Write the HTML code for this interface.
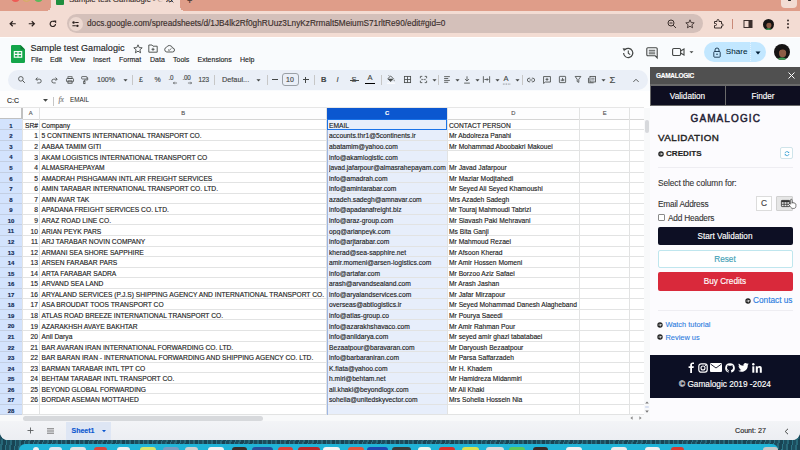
<!DOCTYPE html>
<html><head><meta charset="utf-8">
<style>
*{margin:0;padding:0;box-sizing:border-box}
html,body{width:800px;height:450px;overflow:hidden;background:#1b4f63;font-family:"Liberation Sans",sans-serif}
.ab{position:absolute}
.t{position:absolute;white-space:nowrap;line-height:1;-webkit-text-stroke:0.14px currentColor}
svg{position:absolute;overflow:visible}
.tb svg{transform:scale(.82)}
</style></head><body>

<div class="ab" style="left:0;top:430px;width:800px;height:20px;background:repeating-linear-gradient(100deg,#1c4d5e 0 3px,#276879 3px 5px,#184454 5px 8px,#2b7385 8px 9px)"></div>
<div class="ab" style="left:19px;top:443.8px;width:759px;height:10px;background:#20b4d8;border-radius:6px 6px 0 0"></div>
<div class="ab" style="left:32.5px;top:447.3px;width:6.5px;height:8px;background:#f2f4f5;border-radius:3px"></div>
<div class="ab" style="left:48.8px;top:447.3px;width:13.0px;height:8px;background:#dfe8f0;border-radius:3px"></div>
<div class="ab" style="left:70px;top:447.3px;width:16px;height:8px;background:#e4e4e4;border-radius:3px"></div>
<div class="ab" style="left:94px;top:447.3px;width:13px;height:8px;background:#d8463c;border-radius:3px"></div>
<div class="ab" style="left:117px;top:447.3px;width:13px;height:8px;background:#f0f0f0;border-radius:3px"></div>
<div class="ab" style="left:139.8px;top:447.3px;width:16.19999999999999px;height:8px;background:#d6e36a;border-radius:3px"></div>
<div class="ab" style="left:162.5px;top:447.3px;width:16.30000000000001px;height:8px;background:#7c9cc0;border-radius:3px"></div>
<div class="ab" style="left:185px;top:447.3px;width:13px;height:8px;background:#d0d0d0;border-radius:3px"></div>
<div class="ab" style="left:208px;top:447.3px;width:16px;height:8px;background:#f2f2f2;border-radius:3px"></div>
<div class="ab" style="left:232px;top:447.3px;width:15px;height:8px;background:#3a2c28;border-radius:3px"></div>
<div class="ab" style="left:252px;top:447.3px;width:21px;height:8px;background:#2a4f9a;border-radius:3px"></div>
<div class="ab" style="left:278px;top:447.3px;width:14.5px;height:8px;background:#d9403a;border-radius:3px"></div>
<div class="ab" style="left:298px;top:447.3px;width:22px;height:8px;background:#b8282a;border-radius:3px"></div>
<div class="ab" style="left:323px;top:447.3px;width:17px;height:8px;background:#f4f4f4;border-radius:3px"></div>
<div class="ab" style="left:348px;top:447.3px;width:16px;height:8px;background:#e0553e;border-radius:3px"></div>
<div class="ab" style="left:367px;top:447.3px;width:21px;height:8px;background:#2046b0;border-radius:3px"></div>
<div class="ab" style="left:391.6px;top:447.3px;width:19.399999999999977px;height:8px;background:#3a3a3a;border-radius:3px"></div>
<div class="ab" style="left:417.6px;top:447.3px;width:13.0px;height:8px;background:#eef6ee;border-radius:3px"></div>
<div class="ab" style="left:438.8px;top:447.3px;width:16.19999999999999px;height:8px;background:#d8302c;border-radius:3px"></div>
<div class="ab" style="left:461.5px;top:447.3px;width:17.5px;height:8px;background:#d9e050;border-radius:3px"></div>
<div class="ab" style="left:486px;top:447.3px;width:18px;height:8px;background:#dcdcdc;border-radius:3px"></div>
<div class="ab" style="left:508.7px;top:447.3px;width:16.30000000000001px;height:8px;background:#5cc85a;border-radius:3px"></div>
<div class="ab" style="left:533px;top:447.3px;width:14.600000000000023px;height:8px;background:#3a2a26;border-radius:3px"></div>
<div class="ab" style="left:565.5px;top:447.3px;width:16.299999999999955px;height:8px;background:#f0f0f0;border-radius:3px"></div>
<div class="ab" style="left:611px;top:447.3px;width:16px;height:8px;background:#ececec;border-radius:3px"></div>
<div class="ab" style="left:645px;top:447.3px;width:15px;height:8px;background:#f0f0f0;border-radius:3px"></div>
<div class="ab" style="left:670.6px;top:447.3px;width:13.199999999999932px;height:8px;background:#d83a30;border-radius:3px"></div>
<div class="ab" style="left:762.6px;top:447.3px;width:15.0px;height:8px;background:#c8c8c8;border-radius:3px"></div>
<div class="ab" style="left:0;top:0;width:800px;height:440px;background:#f9fbfd;border-radius:0 0 8px 8px;overflow:hidden">
<div class="ab" style="left:0;top:0;width:800px;height:11px;background:#df9d89"></div>
<div class="ab" style="left:10.5px;top:-7px;width:9px;height:9px;border-radius:50%;background:#ee5b55"></div>
<div class="ab" style="left:22px;top:-7px;width:9px;height:9px;border-radius:50%;background:#dfa585;border:1px solid #d4b060"></div>
<div class="ab" style="left:33.5px;top:-7px;width:9px;height:9px;border-radius:50%;background:#5cb85c"></div>
<div class="ab" style="left:51px;top:0;width:129px;height:12px;background:#f3dcd3;border-radius:0 0 0 0"></div>
<div class="ab" style="left:46px;top:6px;width:5px;height:5px;background:radial-gradient(circle at 0 0,#df9d89 5px,#f3dcd3 5px)"></div>
<div class="ab" style="left:180px;top:6px;width:5px;height:5px;background:radial-gradient(circle at 5px 0,#df9d89 5px,#f3dcd3 5px)"></div>
<div class="ab" style="left:56px;top:-2px;width:8px;height:7px;background:#1e8e3e;border-radius:1px"></div>
<div class="t" style="left:69px;top:-4.2px;font-size:7.9px;color:#3b2f2c">Sample test Gamalogic - Goo</div>
<div class="ab" style="left:152px;top:-2px;width:14px;height:10px;background:linear-gradient(90deg,rgba(243,220,211,0),#f3dcd3 80%)"></div>
<svg style="left:168.5px;top:-2.5px" width="5" height="5" viewBox="0 0 6 6"><path d="M0.8 0.8L5.2 5.2M5.2 0.8L0.8 5.2" stroke="#3b2f2c" stroke-width="1.1"/></svg>
<div class="t" style="left:187px;top:-3px;font-size:9px;color:#3b2f2c">+</div>
<div class="ab" style="left:781px;top:-4px;width:16px;height:11.5px;background:#f2dcd3;border-radius:4px"></div>
<div class="ab" style="left:787.5px;top:-0.5px;width:3px;height:1.8px;background:#222;border-radius:1px"></div>
<div class="ab" style="left:0;top:11px;width:800px;height:26px;background:#f3dcd3"></div>
<svg style="left:8.8px;top:20.3px" width="7.5" height="7.5" viewBox="0 0 10 10"><path d="M9 5H1.8M5 1.6L1.5 5 5 8.4" stroke="#2a201e" stroke-width="1.6" fill="none"/></svg>
<svg style="left:28.2px;top:20.3px" width="7.5" height="7.5" viewBox="0 0 10 10"><path d="M1 5H8.2M5 1.6L8.5 5 5 8.4" stroke="#2a201e" stroke-width="1.6" fill="none"/></svg>
<svg style="left:48.8px;top:20.2px" width="7.8" height="7.8" viewBox="0 0 10 10"><path d="M8.3 5A3.4 3.4 0 1 1 7 2.3" stroke="#2a201e" stroke-width="1.5" fill="none"/><path d="M5.4 0.6L9.2 0.6 9.2 4.4z" fill="#2a201e"/></svg>
<div class="ab" style="left:67px;top:14.3px;width:636px;height:18.8px;background:#d4c0ba;border-radius:10px"></div>
<div class="ab" style="left:68.5px;top:16.8px;width:14.5px;height:14.5px;background:#ecd8d0;border-radius:50%"></div>
<svg style="left:72.3px;top:20.8px" width="7" height="6.5" viewBox="0 0 8 7.5"><circle cx="1.8" cy="1.8" r="1.4" fill="#2a201e"/><path d="M3.6 1.8H7.6M0.4 5.6H4.4" stroke="#2a201e" stroke-width="1.2"/><circle cx="6.2" cy="5.6" r="1.4" fill="#2a201e"/></svg>
<div class="t" style="left:87px;top:20.3px;font-size:8.25px;color:#3b2f2c">docs.google.com/spreadsheets/d/1JB4lk2Rf0ghRUuz3LnyKzRrmalt5MeiumS71rltRe90/edit#gid=0</div>
<svg style="left:667px;top:19px" width="10" height="10" viewBox="0 0 10 10"><circle cx="4" cy="4" r="3" stroke="#3b2f2c" stroke-width="1" fill="none"/><path d="M6.2 6.2L9 9M2.5 4H5.5" stroke="#3b2f2c" stroke-width="1"/></svg>
<svg style="left:685px;top:19px" width="10" height="10" viewBox="0 0 10 10"><path d="M5 0.8L6.2 3.6 9.2 3.8 6.9 5.8 7.6 8.8 5 7.2 2.4 8.8 3.1 5.8 0.8 3.8 3.8 3.6z" stroke="#3b2f2c" stroke-width="0.9" fill="none"/></svg>
<svg style="left:713px;top:19px" width="10" height="10" viewBox="0 0 10 10"><path d="M1.5 2.5H4V1.5A1 1 0 0 1 6 1.5V2.5H8.5V5H9.2A1 1 0 0 1 9.2 7H8.5V9H1.5V6.5H2.5A1 1 0 0 0 2.5 4.5H1.5z" stroke="#3b2f2c" stroke-width="1" fill="none"/></svg>
<div class="ab" style="left:732px;top:19px;width:1px;height:10px;background:#c98a78"></div>
<svg style="left:743px;top:19px" width="10" height="10" viewBox="0 0 10 10"><rect x="1" y="1.5" width="8" height="7" stroke="#3b2f2c" stroke-width="1" fill="none"/><rect x="5.5" y="1.5" width="3.5" height="7" fill="#3b2f2c"/></svg>
<svg style="left:762.5px;top:18.5px" width="11" height="11" viewBox="0 0 16 16"><defs><clipPath id="av1"><circle cx="8" cy="8" r="8"/></clipPath></defs><g clip-path="url(#av1)"><rect width="16" height="16" fill="#161414"/><ellipse cx="8.6" cy="9" rx="3.6" ry="4.3" fill="#8d5c45"/><path d="M4.5 7.5Q5 3 9 3.2 12.5 3.6 12.6 7.5 11 5.2 8.5 5.5 6 5.6 4.5 7.5z" fill="#161414"/><ellipse cx="8" cy="16.5" rx="5.5" ry="3" fill="#3f9a55"/></g></svg>
<svg style="left:786px;top:19px" width="4" height="10" viewBox="0 0 4 10"><circle cx="2" cy="1.5" r="1" fill="#3b2f2c"/><circle cx="2" cy="5" r="1" fill="#3b2f2c"/><circle cx="2" cy="8.5" r="1" fill="#3b2f2c"/></svg>
<div class="ab" style="left:0;top:37px;width:800px;height:1px;background:#ffffff"></div>
<svg style="left:10.5px;top:45px" width="14" height="18" viewBox="0 0 14 18"><path d="M1.3 0H9.5L14 4.5V16.7A1.3 1.3 0 0 1 12.7 18H1.3A1.3 1.3 0 0 1 0 16.7V1.3A1.3 1.3 0 0 1 1.3 0z" fill="#14a54a"/><path d="M9.5 0V4.5H14z" fill="#0c7d35"/><rect x="3.3" y="6.6" width="7.4" height="5.6" fill="none" stroke="#fff" stroke-width="1.1"/><path d="M3.3 9.4H10.7M7 6.6V12.2" stroke="#fff" stroke-width="1.1"/></svg>
<div class="t" style="left:30.5px;top:44px;font-size:9.1px;color:#1f1f1f">Sample test Gamalogic</div>
<svg style="left:132.5px;top:43.5px" width="10" height="10" viewBox="0 0 10 10"><path d="M5 0.8L6.2 3.6 9.2 3.8 6.9 5.8 7.6 8.8 5 7.2 2.4 8.8 3.1 5.8 0.8 3.8 3.8 3.6z" stroke="#444746" stroke-width="0.9" fill="none"/></svg>
<svg style="left:148px;top:44px" width="10" height="9" viewBox="0 0 10 9"><path d="M0.8 1H4L5 2.2H9.2V8.2H0.8z" stroke="#444746" stroke-width="0.9" fill="none"/><path d="M5 3.8V6.8M3.5 5.3H6.5" stroke="#444746" stroke-width="0.9"/></svg>
<svg style="left:163.5px;top:44px" width="11" height="9" viewBox="0 0 11 9"><path d="M2.8 8H8.5A2 2 0 0 0 8.5 4 3.2 3.2 0 0 0 2.5 3.3 2.4 2.4 0 0 0 2.8 8z" stroke="#444746" stroke-width="0.9" fill="none"/><path d="M4 5.5L5.2 6.6 7.2 4.4" stroke="#444746" stroke-width="0.8" fill="none"/></svg>
<div class="t" style="left:31px;top:55.5px;font-size:7px;color:#1f1f1f">File</div>
<div class="t" style="left:50px;top:55.5px;font-size:7px;color:#1f1f1f">Edit</div>
<div class="t" style="left:70px;top:55.5px;font-size:7px;color:#1f1f1f">View</div>
<div class="t" style="left:93px;top:55.5px;font-size:7px;color:#1f1f1f">Insert</div>
<div class="t" style="left:119px;top:55.5px;font-size:7px;color:#1f1f1f">Format</div>
<div class="t" style="left:150px;top:55.5px;font-size:7px;color:#1f1f1f">Data</div>
<div class="t" style="left:173px;top:55.5px;font-size:7px;color:#1f1f1f">Tools</div>
<div class="t" style="left:197.5px;top:55.5px;font-size:7px;color:#1f1f1f">Extensions</div>
<div class="t" style="left:240px;top:55.5px;font-size:7px;color:#1f1f1f">Help</div>
<svg style="left:621.5px;top:46.5px" width="12" height="12" viewBox="0 0 12 12"><path d="M1.6 6A4.6 4.6 0 1 0 3 2.7" stroke="#444746" stroke-width="1.2" fill="none"/><path d="M0.6 1.2L3.6 1.6 2.2 4.4z" fill="#444746"/><path d="M6.3 3.4V6.3L8.2 7.6" stroke="#444746" stroke-width="1.1" fill="none"/></svg>
<svg style="left:646px;top:46.5px" width="12" height="12" viewBox="0 0 12 12"><path d="M1.8 0.8H10.2A1 1 0 0 1 11.2 1.8V10.8L9.2 8.8H1.8A1 1 0 0 1 0.8 7.8V1.8A1 1 0 0 1 1.8 0.8z" stroke="#444746" stroke-width="1.1" fill="none"/><path d="M2.8 3.3H9.2M2.8 5.1H9.2M2.8 6.8H9.2" stroke="#444746" stroke-width="0.9"/></svg>
<svg style="left:672px;top:47px" width="24" height="10" viewBox="0 0 24 10"><rect x="0.6" y="1.5" width="8" height="7" rx="1.2" stroke="#444746" stroke-width="1.1" fill="none"/><path d="M8.6 4L12 2V8L8.6 6" stroke="#444746" stroke-width="1.1" fill="none"/><path d="M17.5 4.2H21.5L19.5 6.2z" fill="#444746"/></svg>
<div class="ab" style="left:704px;top:42px;width:62px;height:20px;background:#c2e7ff;border-radius:10px"></div>
<div class="ab" style="left:749.5px;top:42px;width:1px;height:20px;background:repeating-linear-gradient(#e4f3ff 0 1px,#c2e7ff 1px 2px)"></div>
<svg style="left:713px;top:46.5px" width="8" height="11" viewBox="0 0 8 11"><path d="M2 4.5V3A2 2 0 0 1 6 3V4.5" stroke="#001d35" stroke-width="0.8" fill="none"/><rect x="0.8" y="4.5" width="6.4" height="5.7" rx="0.8" stroke="#001d35" stroke-width="0.8" fill="none"/><circle cx="4" cy="7.3" r="0.7" fill="#001d35"/></svg>
<div class="t" style="left:725.8px;top:48.3px;font-size:8.1px;color:#001d35;-webkit-text-stroke:0.05px #001d35">Share</div>
<svg style="left:754.5px;top:50.5px" width="6" height="4" viewBox="0 0 6 4"><path d="M0.5 0.5H5.5L3 3.5z" fill="#001d35"/></svg>
<svg style="left:774px;top:44px" width="16" height="16" viewBox="0 0 16 16"><defs><clipPath id="av2"><circle cx="8" cy="8" r="8"/></clipPath></defs><g clip-path="url(#av2)"><rect width="16" height="16" fill="#161414"/><ellipse cx="8.6" cy="9" rx="3.6" ry="4.3" fill="#8d5c45"/><path d="M4.5 7.5Q5 3 9 3.2 12.5 3.6 12.6 7.5 11 5.2 8.5 5.5 6 5.6 4.5 7.5z" fill="#161414"/><ellipse cx="8" cy="16.5" rx="5.5" ry="3" fill="#3f9a55"/></g></svg>
<div class="ab" style="left:0;top:90.5px;width:650px;height:17px;background:#fefefe"></div>
<div class="ab" style="left:8px;top:69.5px;width:640px;height:20px;background:#eaeff7;border-radius:10px"></div>
<div class="ab tb" style="left:0;top:-0.3px;width:800px;height:0">
<svg style="left:16.5px;top:75.5px" width="9" height="9" viewBox="0 0 9 9"><circle cx="3.7" cy="3.7" r="2.8" stroke="#444746" stroke-width="1" fill="none"/><path d="M5.8 5.8L8.5 8.5" stroke="#444746" stroke-width="1.2"/></svg>
<svg style="left:34px;top:76px" width="9" height="8" viewBox="0 0 9 8"><path d="M1.5 3H5.5A2.3 2.3 0 0 1 5.5 7.6H3" stroke="#444746" stroke-width="1" fill="none"/><path d="M3.2 1L1.2 3 3.2 5" stroke="#444746" stroke-width="1" fill="none"/></svg>
<svg style="left:50px;top:76px" width="9" height="8" viewBox="0 0 9 8"><path d="M7.5 3H3.5A2.3 2.3 0 0 0 3.5 7.6H6" stroke="#444746" stroke-width="1" fill="none"/><path d="M5.8 1L7.8 3 5.8 5" stroke="#444746" stroke-width="1" fill="none"/></svg>
<svg style="left:64.5px;top:75px" width="10" height="10" viewBox="0 0 10 10"><rect x="2.5" y="1" width="5" height="2.2" stroke="#444746" stroke-width="0.9" fill="none"/><rect x="0.7" y="3.2" width="8.6" height="4" rx="1" stroke="#444746" stroke-width="1" fill="none"/><rect x="2.5" y="6" width="5" height="3" stroke="#444746" stroke-width="0.9" fill="none"/></svg>
<svg style="left:80px;top:75px" width="9" height="10" viewBox="0 0 9 10"><rect x="1" y="0.8" width="6.5" height="3" rx="0.6" stroke="#444746" stroke-width="0.9" fill="none"/><path d="M7.5 2.3H8.4V5H4.3V6.5" stroke="#444746" stroke-width="0.9" fill="none"/><rect x="3.5" y="6.5" width="1.6" height="3" stroke="#444746" stroke-width="0.9" fill="none"/></svg>
<div class="t" style="left:97px;top:76.5px;font-size:7px;color:#444746">100%</div>
<svg style="left:122.5px;top:79px" width="5" height="3" viewBox="0 0 5 3"><path d="M0 0H5L2.5 2.8z" fill="#444746"/></svg>
<div class="ab" style="left:132px;top:75px;width:1px;height:10px;background:#c7c7c7"></div>
<div class="t" style="left:139px;top:76.5px;font-size:7px;color:#444746">£</div>
<div class="t" style="left:154.5px;top:76.5px;font-size:7px;color:#444746">%</div>
<div class="t" style="left:168.5px;top:75.3px;font-size:6.3px;color:#444746;letter-spacing:-0.2px">.0</div>
<svg style="left:172px;top:81px" width="6" height="4" viewBox="0 0 6 4"><path d="M5.5 2H1M2.5 0.5L1 2 2.5 3.5" stroke="#444746" stroke-width="0.8" fill="none"/></svg>
<div class="t" style="left:182.5px;top:75.3px;font-size:6.3px;color:#444746;letter-spacing:-0.3px">.00</div>
<svg style="left:187px;top:81px" width="6" height="4" viewBox="0 0 6 4"><path d="M0.5 2H5M3.5 0.5L5 2 3.5 3.5" stroke="#444746" stroke-width="0.8" fill="none"/></svg>
<div class="t" style="left:198.5px;top:76.8px;font-size:6.4px;color:#444746">123</div>
<div class="ab" style="left:214px;top:75px;width:1px;height:10px;background:#c7c7c7"></div>
<div class="t" style="left:222px;top:76.2px;font-size:7.3px;color:#444746">Defaul...</div>
<svg style="left:255.5px;top:79px" width="5" height="3" viewBox="0 0 5 3"><path d="M0 0H5L2.5 2.8z" fill="#444746"/></svg>
<div class="ab" style="left:267px;top:75px;width:1px;height:10px;background:#c7c7c7"></div>
<div class="ab" style="left:272px;top:79.6px;width:6px;height:0.8px;background:#444746"></div>
<div class="ab" style="left:282px;top:73px;width:17px;height:13.5px;border:1px solid #9aa0a6;border-radius:3px"></div>
<div class="t" style="left:286px;top:76.5px;font-size:7px;color:#444746">10</div>
<div class="ab" style="left:302.8px;top:79.6px;width:6px;height:0.8px;background:#444746"></div><div class="ab" style="left:305.4px;top:77px;width:0.8px;height:6px;background:#444746"></div>
<div class="ab" style="left:314px;top:75px;width:1px;height:10px;background:#c7c7c7"></div>
<div class="t" style="left:321px;top:76px;font-size:7.5px;font-weight:bold;color:#444746">B</div>
<div class="t" style="left:336.5px;top:76px;font-size:7.5px;font-style:italic;color:#444746">I</div>
<div class="t" style="left:351.5px;top:76px;font-size:7.5px;color:#444746">S</div><div class="ab" style="left:350px;top:80px;width:9px;height:1px;background:#444746"></div>
<div class="t" style="left:367.5px;top:74.5px;font-size:7.5px;color:#444746">A</div><div class="ab" style="left:365px;top:83px;width:10px;height:1.6px;background:#000"></div>
<div class="ab" style="left:381px;top:75px;width:1px;height:10px;background:#c7c7c7"></div>
<svg style="left:386px;top:74.5px" width="10" height="11" viewBox="0 0 10 11"><path d="M2.2 0.6L3.2 1.6M1 4.6L4.6 1.2 8 4.6 4.6 8z" stroke="#444746" stroke-width="1" fill="none"/><path d="M1.3 4.6H7.7L4.6 7.6z" fill="#444746"/><path d="M8.8 5.6Q9.8 7.1 8.8 7.8 7.8 7.1 8.8 5.6z" fill="#444746"/><rect x="0" y="9.3" width="10" height="1.3" fill="#fff"/></svg>
<svg style="left:402.5px;top:75.5px" width="9" height="9" viewBox="0 0 9 9"><rect x="0.7" y="0.7" width="7.6" height="7.6" stroke="#444746" stroke-width="1" fill="none"/><path d="M4.5 0.7V8.3M0.7 4.5H8.3" stroke="#444746" stroke-width="1"/></svg>
<svg style="left:418.5px;top:75.5px" width="9" height="9" viewBox="0 0 9 9"><path d="M0.7 3V0.7H3M6 0.7H8.3V3M8.3 6V8.3H6M3 8.3H0.7V6" stroke="#444746" stroke-width="1" fill="none"/><path d="M1.8 4.5H3.4M2.8 3.6L3.6 4.5 2.8 5.4M7.2 4.5H5.6M6.2 3.6L5.4 4.5 6.2 5.4" stroke="#444746" stroke-width="0.8" fill="none"/></svg>
<svg style="left:431.5px;top:79px" width="5" height="3" viewBox="0 0 5 3"><path d="M0 0H5L2.5 2.8z" fill="#444746"/></svg>
<div class="ab" style="left:438px;top:75px;width:1px;height:10px;background:#c7c7c7"></div>
<svg style="left:443px;top:75.5px" width="8" height="9" viewBox="0 0 8 9"><path d="M0.5 1H7.5M0.5 3.3H5.5M0.5 5.6H7.5M0.5 7.9H5.5" stroke="#444746" stroke-width="1"/></svg>
<svg style="left:454.5px;top:79px" width="5" height="3" viewBox="0 0 5 3"><path d="M0 0H5L2.5 2.8z" fill="#444746"/></svg>
<svg style="left:463px;top:75px" width="8" height="10" viewBox="0 0 8 10"><path d="M4 0.5V6M1.5 3.8L4 6.3 6.5 3.8M0.5 8.8H7.5" stroke="#444746" stroke-width="1" fill="none"/></svg>
<svg style="left:474.5px;top:79px" width="5" height="3" viewBox="0 0 5 3"><path d="M0 0H5L2.5 2.8z" fill="#444746"/></svg>
<svg style="left:482px;top:75.5px" width="9" height="9" viewBox="0 0 9 9"><path d="M0.7 0.5V8.5M8.3 0.5V8.5M2 4.5H6.5M5 3L6.5 4.5 5 6" stroke="#444746" stroke-width="1" fill="none"/></svg>
<svg style="left:494.5px;top:79px" width="5" height="3" viewBox="0 0 5 3"><path d="M0 0H5L2.5 2.8z" fill="#444746"/></svg>
<div class="t" style="left:503.5px;top:75.5px;font-size:7.5px;color:#444746">A</div><svg style="left:502px;top:83px" width="10" height="3"><path d="M0 1H10" stroke="#444746" stroke-width="0.8" stroke-dasharray="1 1"/></svg>
<svg style="left:514.5px;top:79px" width="5" height="3" viewBox="0 0 5 3"><path d="M0 0H5L2.5 2.8z" fill="#444746"/></svg>
<div class="ab" style="left:522px;top:75px;width:1px;height:10px;background:#c7c7c7"></div>
<svg style="left:526px;top:77px" width="10" height="6" viewBox="0 0 10 6"><path d="M4 0.8H2.8A2.2 2.2 0 0 0 2.8 5.2H4M6 0.8H7.2A2.2 2.2 0 0 1 7.2 5.2H6M3.3 3H6.7" stroke="#444746" stroke-width="1" fill="none"/></svg>
<svg style="left:542px;top:75px" width="10" height="10" viewBox="0 0 10 10"><path d="M0.8 0.8H9.2V7.5H3L0.8 9.2z" stroke="#444746" stroke-width="1" fill="none"/><path d="M5 2.3V6M3.2 4.2H6.8" stroke="#444746" stroke-width="1"/></svg>
<svg style="left:557.5px;top:75.5px" width="9" height="9" viewBox="0 0 9 9"><rect x="0.7" y="0.7" width="7.6" height="7.6" rx="0.5" stroke="#444746" stroke-width="1" fill="none"/><path d="M3 6.5V4.5M4.5 6.5V2.5M6 6.5V3.8" stroke="#444746" stroke-width="1"/></svg>
<svg style="left:574px;top:75.5px" width="8" height="9" viewBox="0 0 8 9"><path d="M0.5 0.8H7.5L5 4.2V8L3 7V4.2z" stroke="#444746" stroke-width="1" fill="none"/></svg>
<svg style="left:587px;top:75.5px" width="10" height="9" viewBox="0 0 10 9"><rect x="2.5" y="0.7" width="6.8" height="6.8" stroke="#444746" stroke-width="1" fill="none"/><path d="M0.7 2.5V8.5H7" stroke="#444746" stroke-width="1" fill="none"/><path d="M4 3H8M4 5H8" stroke="#444746" stroke-width="0.8"/></svg>
<svg style="left:600.5px;top:79px" width="5" height="3" viewBox="0 0 5 3"><path d="M0 0H5L2.5 2.8z" fill="#444746"/></svg>
<div class="t" style="left:609.5px;top:75px;font-size:9.5px;color:#444746">Σ</div>
<svg style="left:631.5px;top:77.8px" width="8" height="5" viewBox="0 0 8 5"><path d="M0.8 4.2L4 1 7.2 4.2" stroke="#444746" stroke-width="1.1" fill="none"/></svg>
</div>
<div class="t" style="left:7px;top:96.5px;font-size:7px;color:#1f1f1f">C:C</div>
<svg style="left:43px;top:98.7px" width="5" height="3" viewBox="0 0 5 3"><path d="M0 0H5L2.5 2.8z" fill="#444746"/></svg>
<div class="ab" style="left:53px;top:96.5px;width:1px;height:9px;background:#c7c7c7"></div>
<div class="t" style="left:58.5px;top:96px;font-size:7.5px;font-style:italic;font-family:'Liberation Serif';color:#777">fx</div>
<div class="t" style="left:70px;top:97.3px;font-size:6.3px;color:#1f1f1f;-webkit-text-stroke:0">EMAIL</div>
<div class="ab" style="left:0;top:107px;width:650px;height:314px;background:#fff"></div>
<div class="ab" style="left:0;top:107.5px;width:644px;height:11.799999999999997px;background:#fdfdfe"></div>
<div class="ab" style="left:0;top:119.3px;width:22px;height:295.68px;background:#d3e3fd"></div>
<div class="ab" style="left:327px;top:107.5px;width:120px;height:11.799999999999997px;background:#0b57d0"></div>
<div class="ab" style="left:327px;top:119.3px;width:120px;height:295.68px;background:#e7eefb"></div>
<div class="ab" style="left:0;top:107px;width:644px;height:1px;background:#e6e6e6"></div>
<div class="ab" style="left:22px;top:119px;width:622px;height:1px;background:#d5d5d5"></div>
<div class="ab" style="left:22px;top:129px;width:622px;height:1px;background:#e2e3e3"></div>
<div class="ab" style="left:0;top:129px;width:22px;height:1px;background:#c3cfe3"></div>
<div class="ab" style="left:22px;top:140px;width:622px;height:1px;background:#e2e3e3"></div>
<div class="ab" style="left:0;top:140px;width:22px;height:1px;background:#c3cfe3"></div>
<div class="ab" style="left:22px;top:150px;width:622px;height:1px;background:#e2e3e3"></div>
<div class="ab" style="left:0;top:150px;width:22px;height:1px;background:#c3cfe3"></div>
<div class="ab" style="left:22px;top:161px;width:622px;height:1px;background:#e2e3e3"></div>
<div class="ab" style="left:0;top:161px;width:22px;height:1px;background:#c3cfe3"></div>
<div class="ab" style="left:22px;top:172px;width:622px;height:1px;background:#e2e3e3"></div>
<div class="ab" style="left:0;top:172px;width:22px;height:1px;background:#c3cfe3"></div>
<div class="ab" style="left:22px;top:182px;width:622px;height:1px;background:#e2e3e3"></div>
<div class="ab" style="left:0;top:182px;width:22px;height:1px;background:#c3cfe3"></div>
<div class="ab" style="left:22px;top:193px;width:622px;height:1px;background:#e2e3e3"></div>
<div class="ab" style="left:0;top:193px;width:22px;height:1px;background:#c3cfe3"></div>
<div class="ab" style="left:22px;top:203px;width:622px;height:1px;background:#e2e3e3"></div>
<div class="ab" style="left:0;top:203px;width:22px;height:1px;background:#c3cfe3"></div>
<div class="ab" style="left:22px;top:214px;width:622px;height:1px;background:#e2e3e3"></div>
<div class="ab" style="left:0;top:214px;width:22px;height:1px;background:#c3cfe3"></div>
<div class="ab" style="left:22px;top:224px;width:622px;height:1px;background:#e2e3e3"></div>
<div class="ab" style="left:0;top:224px;width:22px;height:1px;background:#c3cfe3"></div>
<div class="ab" style="left:22px;top:235px;width:622px;height:1px;background:#e2e3e3"></div>
<div class="ab" style="left:0;top:235px;width:22px;height:1px;background:#c3cfe3"></div>
<div class="ab" style="left:22px;top:246px;width:622px;height:1px;background:#e2e3e3"></div>
<div class="ab" style="left:0;top:246px;width:22px;height:1px;background:#c3cfe3"></div>
<div class="ab" style="left:22px;top:256px;width:622px;height:1px;background:#e2e3e3"></div>
<div class="ab" style="left:0;top:256px;width:22px;height:1px;background:#c3cfe3"></div>
<div class="ab" style="left:22px;top:267px;width:622px;height:1px;background:#e2e3e3"></div>
<div class="ab" style="left:0;top:267px;width:22px;height:1px;background:#c3cfe3"></div>
<div class="ab" style="left:22px;top:277px;width:622px;height:1px;background:#e2e3e3"></div>
<div class="ab" style="left:0;top:277px;width:22px;height:1px;background:#c3cfe3"></div>
<div class="ab" style="left:22px;top:288px;width:622px;height:1px;background:#e2e3e3"></div>
<div class="ab" style="left:0;top:288px;width:22px;height:1px;background:#c3cfe3"></div>
<div class="ab" style="left:22px;top:298px;width:622px;height:1px;background:#e2e3e3"></div>
<div class="ab" style="left:0;top:298px;width:22px;height:1px;background:#c3cfe3"></div>
<div class="ab" style="left:22px;top:309px;width:622px;height:1px;background:#e2e3e3"></div>
<div class="ab" style="left:0;top:309px;width:22px;height:1px;background:#c3cfe3"></div>
<div class="ab" style="left:22px;top:319px;width:622px;height:1px;background:#e2e3e3"></div>
<div class="ab" style="left:0;top:319px;width:22px;height:1px;background:#c3cfe3"></div>
<div class="ab" style="left:22px;top:330px;width:622px;height:1px;background:#e2e3e3"></div>
<div class="ab" style="left:0;top:330px;width:22px;height:1px;background:#c3cfe3"></div>
<div class="ab" style="left:22px;top:341px;width:622px;height:1px;background:#e2e3e3"></div>
<div class="ab" style="left:0;top:341px;width:22px;height:1px;background:#c3cfe3"></div>
<div class="ab" style="left:22px;top:351px;width:622px;height:1px;background:#e2e3e3"></div>
<div class="ab" style="left:0;top:351px;width:22px;height:1px;background:#c3cfe3"></div>
<div class="ab" style="left:22px;top:362px;width:622px;height:1px;background:#e2e3e3"></div>
<div class="ab" style="left:0;top:362px;width:22px;height:1px;background:#c3cfe3"></div>
<div class="ab" style="left:22px;top:372px;width:622px;height:1px;background:#e2e3e3"></div>
<div class="ab" style="left:0;top:372px;width:22px;height:1px;background:#c3cfe3"></div>
<div class="ab" style="left:22px;top:383px;width:622px;height:1px;background:#e2e3e3"></div>
<div class="ab" style="left:0;top:383px;width:22px;height:1px;background:#c3cfe3"></div>
<div class="ab" style="left:22px;top:393px;width:622px;height:1px;background:#e2e3e3"></div>
<div class="ab" style="left:0;top:393px;width:22px;height:1px;background:#c3cfe3"></div>
<div class="ab" style="left:22px;top:404px;width:622px;height:1px;background:#e2e3e3"></div>
<div class="ab" style="left:0;top:404px;width:22px;height:1px;background:#c3cfe3"></div>
<div class="ab" style="left:22px;top:414px;width:622px;height:1px;background:#e2e3e3"></div>
<div class="ab" style="left:0;top:414px;width:22px;height:1px;background:#c3cfe3"></div>
<div class="ab" style="left:22px;top:107.5px;width:1px;height:307.48px;background:#e2e3e3"></div>
<div class="ab" style="left:39px;top:107.5px;width:1px;height:307.48px;background:#e2e3e3"></div>
<div class="ab" style="left:326px;top:107.5px;width:1px;height:307.48px;background:#e2e3e3"></div>
<div class="ab" style="left:447px;top:107.5px;width:1px;height:307.48px;background:#e2e3e3"></div>
<div class="ab" style="left:579px;top:107.5px;width:1px;height:307.48px;background:#e2e3e3"></div>
<div class="ab" style="left:629px;top:107.5px;width:1px;height:307.48px;background:#e2e3e3"></div>
<div class="ab" style="left:644px;top:107.5px;width:1px;height:307.48px;background:#e2e3e3"></div>
<div class="ab" style="left:21px;top:107.5px;width:1.5px;height:11.799999999999997px;background:#c0c0c0"></div>
<div class="ab" style="left:0;top:117.8px;width:22px;height:1.5px;background:#c0c0c0"></div>
<div class="ab" style="left:326.5px;top:119.3px;width:1px;height:295.68px;background:#9fb7e3"></div>
<div class="ab" style="left:327px;top:119.0px;width:120px;height:11.16px;border:1px solid #1a73e8"></div>
<div class="t" style="left:22px;width:17.5px;text-align:center;top:110.8px;font-size:5.8px;color:#575757;font-weight:normal">A</div>
<div class="t" style="left:39.5px;width:287.5px;text-align:center;top:110.8px;font-size:5.8px;color:#575757;font-weight:normal">B</div>
<div class="t" style="left:327px;width:120px;text-align:center;top:110.8px;font-size:5.8px;color:#fff;font-weight:bold">C</div>
<div class="t" style="left:447px;width:132.5px;text-align:center;top:110.8px;font-size:5.8px;color:#575757;font-weight:normal">D</div>
<div class="t" style="left:579.5px;width:50.5px;text-align:center;top:110.8px;font-size:5.8px;color:#575757;font-weight:normal">E</div>
<div class="t" style="left:0;width:22px;text-align:center;top:122.8px;font-size:6px;font-weight:bold;color:#0f2a55">1</div>
<div class="t" style="left:22px;width:16px;text-align:right;top:122.89999999999999px;font-size:6.7px;color:#222">SR#</div>
<div class="t" style="left:41.5px;top:122.89999999999999px;font-size:6.7px;color:#222">Company</div>
<div class="t" style="left:329px;top:122.89999999999999px;width:116.5px;overflow:hidden;font-size:6.7px;color:#222">EMAIL</div>
<div class="t" style="left:449px;top:122.89999999999999px;font-size:6.7px;color:#222">CONTACT PERSON</div>
<div class="t" style="left:0;width:22px;text-align:center;top:133.35999999999999px;font-size:6px;font-weight:bold;color:#0f2a55">2</div>
<div class="t" style="left:22px;width:16px;text-align:right;top:133.45999999999998px;font-size:6.7px;color:#222">1</div>
<div class="t" style="left:41.5px;top:133.45999999999998px;font-size:6.7px;color:#222">5 CONTINENTS INTERNATIONAL TRANSPORT CO.</div>
<div class="t" style="left:329px;top:133.45999999999998px;width:116.5px;overflow:hidden;font-size:6.7px;color:#222">accounts.thr1@5continents.ir</div>
<div class="t" style="left:449px;top:133.45999999999998px;font-size:6.7px;color:#222">Mr Abdolreza Panahi</div>
<div class="t" style="left:0;width:22px;text-align:center;top:143.92px;font-size:6px;font-weight:bold;color:#0f2a55">3</div>
<div class="t" style="left:22px;width:16px;text-align:right;top:144.01999999999998px;font-size:6.7px;color:#222">2</div>
<div class="t" style="left:41.5px;top:144.01999999999998px;font-size:6.7px;color:#222">AABAA TAMIM GITI</div>
<div class="t" style="left:329px;top:144.01999999999998px;width:116.5px;overflow:hidden;font-size:6.7px;color:#222">abatamim@yahoo.com</div>
<div class="t" style="left:449px;top:144.01999999999998px;font-size:6.7px;color:#222">Mr Mohammad Aboobakri Makouei</div>
<div class="t" style="left:0;width:22px;text-align:center;top:154.48px;font-size:6px;font-weight:bold;color:#0f2a55">4</div>
<div class="t" style="left:22px;width:16px;text-align:right;top:154.57999999999998px;font-size:6.7px;color:#222">3</div>
<div class="t" style="left:41.5px;top:154.57999999999998px;font-size:6.7px;color:#222">AKAM LOGISTICS INTERNATIONAL TRANSPORT CO</div>
<div class="t" style="left:329px;top:154.57999999999998px;width:116.5px;overflow:hidden;font-size:6.7px;color:#222">info@akamlogistic.com</div>
<div class="t" style="left:0;width:22px;text-align:center;top:165.04px;font-size:6px;font-weight:bold;color:#0f2a55">5</div>
<div class="t" style="left:22px;width:16px;text-align:right;top:165.14px;font-size:6.7px;color:#222">4</div>
<div class="t" style="left:41.5px;top:165.14px;font-size:6.7px;color:#222">ALMASRAHEPAYAM</div>
<div class="t" style="left:329px;top:165.14px;width:116.5px;overflow:hidden;font-size:6.7px;color:#222">javad.jafarpour@almasrahepayam.com</div>
<div class="t" style="left:449px;top:165.14px;font-size:6.7px;color:#222">Mr Javad Jafarpour</div>
<div class="t" style="left:0;width:22px;text-align:center;top:175.6px;font-size:6px;font-weight:bold;color:#0f2a55">6</div>
<div class="t" style="left:22px;width:16px;text-align:right;top:175.7px;font-size:6.7px;color:#222">5</div>
<div class="t" style="left:41.5px;top:175.7px;font-size:6.7px;color:#222">AMADRAH PISHGAMAN INTL AIR FREIGHT SERVICES</div>
<div class="t" style="left:329px;top:175.7px;width:116.5px;overflow:hidden;font-size:6.7px;color:#222">info@amadrah.com</div>
<div class="t" style="left:449px;top:175.7px;font-size:6.7px;color:#222">Mr Maziar Modjtahedi</div>
<div class="t" style="left:0;width:22px;text-align:center;top:186.16px;font-size:6px;font-weight:bold;color:#0f2a55">7</div>
<div class="t" style="left:22px;width:16px;text-align:right;top:186.26px;font-size:6.7px;color:#222">6</div>
<div class="t" style="left:41.5px;top:186.26px;font-size:6.7px;color:#222">AMIN TARABAR INTERNATIONAL TRANSPORT CO. LTD.</div>
<div class="t" style="left:329px;top:186.26px;width:116.5px;overflow:hidden;font-size:6.7px;color:#222">info@amintarabar.com</div>
<div class="t" style="left:449px;top:186.26px;font-size:6.7px;color:#222">Mr Seyed Ali Seyed Khamoushi</div>
<div class="t" style="left:0;width:22px;text-align:center;top:196.72px;font-size:6px;font-weight:bold;color:#0f2a55">8</div>
<div class="t" style="left:22px;width:16px;text-align:right;top:196.82px;font-size:6.7px;color:#222">7</div>
<div class="t" style="left:41.5px;top:196.82px;font-size:6.7px;color:#222">AMN AVAR TAK</div>
<div class="t" style="left:329px;top:196.82px;width:116.5px;overflow:hidden;font-size:6.7px;color:#222">azadeh.sadegh@amnavar.com</div>
<div class="t" style="left:449px;top:196.82px;font-size:6.7px;color:#222">Mrs Azadeh Sadegh</div>
<div class="t" style="left:0;width:22px;text-align:center;top:207.28px;font-size:6px;font-weight:bold;color:#0f2a55">9</div>
<div class="t" style="left:22px;width:16px;text-align:right;top:207.38px;font-size:6.7px;color:#222">8</div>
<div class="t" style="left:41.5px;top:207.38px;font-size:6.7px;color:#222">APADANA FREIGHT SERVICES CO. LTD.</div>
<div class="t" style="left:329px;top:207.38px;width:116.5px;overflow:hidden;font-size:6.7px;color:#222">info@apadanafreight.biz</div>
<div class="t" style="left:449px;top:207.38px;font-size:6.7px;color:#222">Mr Touraj Mahmoudi Tabrizi</div>
<div class="t" style="left:0;width:22px;text-align:center;top:217.84px;font-size:6px;font-weight:bold;color:#0f2a55">10</div>
<div class="t" style="left:22px;width:16px;text-align:right;top:217.94px;font-size:6.7px;color:#222">9</div>
<div class="t" style="left:41.5px;top:217.94px;font-size:6.7px;color:#222">ARAZ ROAD LINE CO.</div>
<div class="t" style="left:329px;top:217.94px;width:116.5px;overflow:hidden;font-size:6.7px;color:#222">info@araz-group.com</div>
<div class="t" style="left:449px;top:217.94px;font-size:6.7px;color:#222">Mr Siavash Paki Mehravani</div>
<div class="t" style="left:0;width:22px;text-align:center;top:228.4px;font-size:6px;font-weight:bold;color:#0f2a55">11</div>
<div class="t" style="left:22px;width:16px;text-align:right;top:228.5px;font-size:6.7px;color:#222">10</div>
<div class="t" style="left:41.5px;top:228.5px;font-size:6.7px;color:#222">ARIAN PEYK PARS</div>
<div class="t" style="left:329px;top:228.5px;width:116.5px;overflow:hidden;font-size:6.7px;color:#222">opg@arianpeyk.com</div>
<div class="t" style="left:449px;top:228.5px;font-size:6.7px;color:#222">Ms Bita Ganji</div>
<div class="t" style="left:0;width:22px;text-align:center;top:238.96px;font-size:6px;font-weight:bold;color:#0f2a55">12</div>
<div class="t" style="left:22px;width:16px;text-align:right;top:239.06px;font-size:6.7px;color:#222">11</div>
<div class="t" style="left:41.5px;top:239.06px;font-size:6.7px;color:#222">ARJ TARABAR NOVIN COMPANY</div>
<div class="t" style="left:329px;top:239.06px;width:116.5px;overflow:hidden;font-size:6.7px;color:#222">info@arjtarabar.com</div>
<div class="t" style="left:449px;top:239.06px;font-size:6.7px;color:#222">Mr Mahmoud Rezaei</div>
<div class="t" style="left:0;width:22px;text-align:center;top:249.51999999999998px;font-size:6px;font-weight:bold;color:#0f2a55">13</div>
<div class="t" style="left:22px;width:16px;text-align:right;top:249.61999999999998px;font-size:6.7px;color:#222">12</div>
<div class="t" style="left:41.5px;top:249.61999999999998px;font-size:6.7px;color:#222">ARMANI SEA SHORE SAPPHIRE</div>
<div class="t" style="left:329px;top:249.61999999999998px;width:116.5px;overflow:hidden;font-size:6.7px;color:#222">kherad@sea-sapphire.net</div>
<div class="t" style="left:449px;top:249.61999999999998px;font-size:6.7px;color:#222">Mr Afsoon Kherad</div>
<div class="t" style="left:0;width:22px;text-align:center;top:260.08px;font-size:6px;font-weight:bold;color:#0f2a55">14</div>
<div class="t" style="left:22px;width:16px;text-align:right;top:260.18px;font-size:6.7px;color:#222">13</div>
<div class="t" style="left:41.5px;top:260.18px;font-size:6.7px;color:#222">ARSEN FARABAR PARS</div>
<div class="t" style="left:329px;top:260.18px;width:116.5px;overflow:hidden;font-size:6.7px;color:#222">amir.momeni@arsen-logistics.com</div>
<div class="t" style="left:449px;top:260.18px;font-size:6.7px;color:#222">Mr Amir Hossen Momeni</div>
<div class="t" style="left:0;width:22px;text-align:center;top:270.64px;font-size:6px;font-weight:bold;color:#0f2a55">15</div>
<div class="t" style="left:22px;width:16px;text-align:right;top:270.74px;font-size:6.7px;color:#222">14</div>
<div class="t" style="left:41.5px;top:270.74px;font-size:6.7px;color:#222">ARTA FARABAR SADRA</div>
<div class="t" style="left:329px;top:270.74px;width:116.5px;overflow:hidden;font-size:6.7px;color:#222">info@artafar.com</div>
<div class="t" style="left:449px;top:270.74px;font-size:6.7px;color:#222">Mr Borzoo Aziz Safaei</div>
<div class="t" style="left:0;width:22px;text-align:center;top:281.2px;font-size:6px;font-weight:bold;color:#0f2a55">16</div>
<div class="t" style="left:22px;width:16px;text-align:right;top:281.3px;font-size:6.7px;color:#222">15</div>
<div class="t" style="left:41.5px;top:281.3px;font-size:6.7px;color:#222">ARVAND SEA LAND</div>
<div class="t" style="left:329px;top:281.3px;width:116.5px;overflow:hidden;font-size:6.7px;color:#222">arash@arvandsealand.com</div>
<div class="t" style="left:449px;top:281.3px;font-size:6.7px;color:#222">Mr Arash Jashan</div>
<div class="t" style="left:0;width:22px;text-align:center;top:291.76px;font-size:6px;font-weight:bold;color:#0f2a55">17</div>
<div class="t" style="left:22px;width:16px;text-align:right;top:291.86px;font-size:6.7px;color:#222">16</div>
<div class="t" style="left:41.5px;top:291.86px;font-size:6.7px;color:#222">ARYALAND SERVICES (P.J.S) SHIPPING AGENCY AND INTERNATIONAL TRANSPORT CO.</div>
<div class="t" style="left:329px;top:291.86px;width:116.5px;overflow:hidden;font-size:6.7px;color:#222">info@aryalandservices.com</div>
<div class="t" style="left:449px;top:291.86px;font-size:6.7px;color:#222">Mr Jafar Mirzapour</div>
<div class="t" style="left:0;width:22px;text-align:center;top:302.32px;font-size:6px;font-weight:bold;color:#0f2a55">18</div>
<div class="t" style="left:22px;width:16px;text-align:right;top:302.42px;font-size:6.7px;color:#222">17</div>
<div class="t" style="left:41.5px;top:302.42px;font-size:6.7px;color:#222">ASA BROUDAT TOOS TRANSPORT CO</div>
<div class="t" style="left:329px;top:302.42px;width:116.5px;overflow:hidden;font-size:6.7px;color:#222">overseas@abtlogistics.ir</div>
<div class="t" style="left:449px;top:302.42px;font-size:6.7px;color:#222">Mr Seyed Mohammad Danesh Alagheband</div>
<div class="t" style="left:0;width:22px;text-align:center;top:312.88px;font-size:6px;font-weight:bold;color:#0f2a55">19</div>
<div class="t" style="left:22px;width:16px;text-align:right;top:312.98px;font-size:6.7px;color:#222">18</div>
<div class="t" style="left:41.5px;top:312.98px;font-size:6.7px;color:#222">ATLAS ROAD BREEZE INTERNATIONAL TRANSPORT CO.</div>
<div class="t" style="left:329px;top:312.98px;width:116.5px;overflow:hidden;font-size:6.7px;color:#222">info@atlas-group.co</div>
<div class="t" style="left:449px;top:312.98px;font-size:6.7px;color:#222">Mr Pourya Saeedi</div>
<div class="t" style="left:0;width:22px;text-align:center;top:323.44px;font-size:6px;font-weight:bold;color:#0f2a55">20</div>
<div class="t" style="left:22px;width:16px;text-align:right;top:323.54px;font-size:6.7px;color:#222">19</div>
<div class="t" style="left:41.5px;top:323.54px;font-size:6.7px;color:#222">AZARAKHSH AVAYE BAKHTAR</div>
<div class="t" style="left:329px;top:323.54px;width:116.5px;overflow:hidden;font-size:6.7px;color:#222">info@azarakhshavaco.com</div>
<div class="t" style="left:449px;top:323.54px;font-size:6.7px;color:#222">Mr Amir Rahman Pour</div>
<div class="t" style="left:0;width:22px;text-align:center;top:334.0px;font-size:6px;font-weight:bold;color:#0f2a55">21</div>
<div class="t" style="left:22px;width:16px;text-align:right;top:334.1px;font-size:6.7px;color:#222">20</div>
<div class="t" style="left:41.5px;top:334.1px;font-size:6.7px;color:#222">Anil Darya</div>
<div class="t" style="left:329px;top:334.1px;width:116.5px;overflow:hidden;font-size:6.7px;color:#222">info@anildarya.com</div>
<div class="t" style="left:449px;top:334.1px;font-size:6.7px;color:#222">Mr seyed amir ghazi tabatabaei</div>
<div class="t" style="left:0;width:22px;text-align:center;top:344.56px;font-size:6px;font-weight:bold;color:#0f2a55">22</div>
<div class="t" style="left:22px;width:16px;text-align:right;top:344.66px;font-size:6.7px;color:#222">21</div>
<div class="t" style="left:41.5px;top:344.66px;font-size:6.7px;color:#222">BAR AVARAN IRAN INTERNATIONAL FORWARDING CO. LTD.</div>
<div class="t" style="left:329px;top:344.66px;width:116.5px;overflow:hidden;font-size:6.7px;color:#222">Bezaatpour@baravaran.com</div>
<div class="t" style="left:449px;top:344.66px;font-size:6.7px;color:#222">Mr Daryoush Bezaatpour</div>
<div class="t" style="left:0;width:22px;text-align:center;top:355.12px;font-size:6px;font-weight:bold;color:#0f2a55">23</div>
<div class="t" style="left:22px;width:16px;text-align:right;top:355.22px;font-size:6.7px;color:#222">22</div>
<div class="t" style="left:41.5px;top:355.22px;font-size:6.7px;color:#222">BAR BARAN IRAN - INTERNATIONAL FORWARDING AND SHIPPING AGENCY CO. LTD.</div>
<div class="t" style="left:329px;top:355.22px;width:116.5px;overflow:hidden;font-size:6.7px;color:#222">info@barbaraniran.com</div>
<div class="t" style="left:449px;top:355.22px;font-size:6.7px;color:#222">Mr Parsa Saffarzadeh</div>
<div class="t" style="left:0;width:22px;text-align:center;top:365.68px;font-size:6px;font-weight:bold;color:#0f2a55">24</div>
<div class="t" style="left:22px;width:16px;text-align:right;top:365.78000000000003px;font-size:6.7px;color:#222">23</div>
<div class="t" style="left:41.5px;top:365.78000000000003px;font-size:6.7px;color:#222">BARMAN TARABAR INTL TPT CO</div>
<div class="t" style="left:329px;top:365.78000000000003px;width:116.5px;overflow:hidden;font-size:6.7px;color:#222">K.fiata@yahoo.com</div>
<div class="t" style="left:449px;top:365.78000000000003px;font-size:6.7px;color:#222">Mr H. Khadem</div>
<div class="t" style="left:0;width:22px;text-align:center;top:376.24px;font-size:6px;font-weight:bold;color:#0f2a55">25</div>
<div class="t" style="left:22px;width:16px;text-align:right;top:376.34000000000003px;font-size:6.7px;color:#222">24</div>
<div class="t" style="left:41.5px;top:376.34000000000003px;font-size:6.7px;color:#222">BEHTAM TARABAR INTL TRANSPORT CO.</div>
<div class="t" style="left:329px;top:376.34000000000003px;width:116.5px;overflow:hidden;font-size:6.7px;color:#222">h.miri@behtam.net</div>
<div class="t" style="left:449px;top:376.34000000000003px;font-size:6.7px;color:#222">Mr Hamidreza Midanmiri</div>
<div class="t" style="left:0;width:22px;text-align:center;top:386.8px;font-size:6px;font-weight:bold;color:#0f2a55">26</div>
<div class="t" style="left:22px;width:16px;text-align:right;top:386.90000000000003px;font-size:6.7px;color:#222">25</div>
<div class="t" style="left:41.5px;top:386.90000000000003px;font-size:6.7px;color:#222">BEYOND GLOBAL FORWARDING</div>
<div class="t" style="left:329px;top:386.90000000000003px;width:116.5px;overflow:hidden;font-size:6.7px;color:#222">ali.khaki@beyondlogx.com</div>
<div class="t" style="left:449px;top:386.90000000000003px;font-size:6.7px;color:#222">Mr Ali Khaki</div>
<div class="t" style="left:0;width:22px;text-align:center;top:397.36px;font-size:6px;font-weight:bold;color:#0f2a55">27</div>
<div class="t" style="left:22px;width:16px;text-align:right;top:397.46000000000004px;font-size:6.7px;color:#222">26</div>
<div class="t" style="left:41.5px;top:397.46000000000004px;font-size:6.7px;color:#222">BORDAR ASEMAN MOTTAHED</div>
<div class="t" style="left:329px;top:397.46000000000004px;width:116.5px;overflow:hidden;font-size:6.7px;color:#222">soheila@unitedskyvector.com</div>
<div class="t" style="left:449px;top:397.46000000000004px;font-size:6.7px;color:#222">Mrs Soheila Hossein Nia</div>
<div class="t" style="left:0;width:22px;text-align:center;top:407.92px;font-size:6px;font-weight:bold;color:#0f2a55">28</div>
<div class="ab" style="left:0;top:414.5px;width:644px;height:6.5px;background:#f8f9fa"></div>
<div class="ab" style="left:23px;top:416px;width:240px;height:4.5px;background:#d7d9dc;border-radius:3px"></div>
<div class="ab" style="left:644px;top:107.5px;width:6px;height:314px;background:#f8f9fa"></div>
<div class="ab" style="left:645px;top:120px;width:3.5px;height:13px;background:#d7d9dc;border-radius:2px"></div>
<svg style="left:644px;top:399px" width="6" height="16" viewBox="0 0 6 16"><path d="M1.2 4.6L3 2.4 4.8 4.6z" fill="#777"/><path d="M1.2 11.6L3 13.8 4.8 11.6z" fill="#777"/><path d="M1.2 8H4.8" stroke="#9db3e0" stroke-width="0.7"/></svg>
<svg style="left:628px;top:415px" width="16" height="6" viewBox="0 0 16 6"><path d="M4.6 1.2L2.4 3 4.6 4.8z" fill="#888"/><path d="M11.4 1.2L13.6 3 11.4 4.8z" fill="#888"/></svg>
<div class="ab" style="left:0;top:421px;width:800px;height:19px;background:linear-gradient(#f3f4f7,#eceef2)"></div>
<svg style="left:26.5px;top:427px" width="7" height="7" viewBox="0 0 7 7"><path d="M0.5 3.5H6.5M3.5 0.5V6.5" stroke="#5a5d60" stroke-width="0.9"/></svg>
<svg style="left:46.5px;top:427.5px" width="7" height="6" viewBox="0 0 7 6"><path d="M0 0.8H7M0 3H7M0 5.2H7" stroke="#666" stroke-width="0.9"/></svg>
<div class="ab" style="left:66px;top:421.5px;width:45px;height:18.5px;background:#dee6f4"></div>
<div class="t" style="left:71.5px;top:426.5px;font-size:7px;font-weight:bold;color:#0b57d0">Sheet1</div>
<svg style="left:101.5px;top:429.8px" width="4" height="2.5" viewBox="0 0 5 3"><path d="M0 0H5L2.5 2.8z" fill="#0b57d0"/></svg>
<div class="t" style="left:735px;top:428px;font-size:7.15px;color:#1f1f1f">Count: 27</div>
<svg style="left:783.5px;top:428px" width="5" height="7" viewBox="0 0 5 7"><path d="M4 0.8L1.2 3.5 4 6.2" stroke="#444746" stroke-width="1" fill="none"/></svg>
<div class="ab" style="left:650px;top:67px;width:150px;height:354px;background:#fcfbfe"></div>
<div class="ab" style="left:650px;top:67px;width:150px;height:39px;background:#505050"></div>
<div class="t" style="left:656px;top:73.4px;font-size:6.5px;font-weight:bold;letter-spacing:-0.28px;color:#fff">GAMALOGIC</div>
<svg style="left:787.5px;top:72px" width="7" height="7" viewBox="0 0 7 7"><path d="M0.5 0.5L6.5 6.5M6.5 0.5L0.5 6.5" stroke="#fff" stroke-width="1"/></svg>
<div class="ab" style="left:650px;top:84px;width:150px;height:22px;background:#6a6a6a"></div>
<div class="ab" style="left:651px;top:85.5px;width:73.5px;height:19.5px;background:#0e0e20"></div>
<div class="ab" style="left:726px;top:85.5px;width:74px;height:19.5px;background:#0e0e20"></div>
<div class="t" style="left:651px;width:73px;text-align:center;top:92.7px;font-size:8.2px;color:#fff">Validation</div>
<div class="t" style="left:726px;width:74px;text-align:center;top:92.7px;font-size:8.2px;color:#fff">Finder</div>
<div class="t" style="left:690.5px;top:113.5px;font-size:10px;letter-spacing:1.1px;-webkit-text-stroke:0.45px #1f2033;color:#1f2033">GAMALOGIC</div>
<div class="t" style="left:658px;top:133px;font-size:9.8px;letter-spacing:0.45px;-webkit-text-stroke:0.4px #222;color:#222">VALIDATION</div>
<svg style="left:657.8px;top:150.8px" width="6" height="6" viewBox="0 0 7 7"><circle cx="3.5" cy="3.5" r="3.2" fill="#222"/><path d="M1.8 3.5H5M3.6 2L5 3.5 3.6 5" stroke="#fff" stroke-width="0.9" fill="none"/></svg>
<div class="t" style="left:666px;top:150.4px;font-size:8.1px;font-weight:bold;color:#222">CREDITS</div>
<div class="ab" style="left:779.5px;top:147px;width:13.5px;height:12px;border:1px solid #cfe4ea;border-radius:2px;background:#fff"></div>
<svg style="left:783.5px;top:150.5px" width="6" height="5.3" viewBox="0 0 8 7"><path d="M1.3 3A2.7 2.7 0 0 1 6.5 2.5M6.7 4A2.7 2.7 0 0 1 1.5 4.5" stroke="#2d9bd2" stroke-width="1" fill="none"/><path d="M6.8 0.8V2.8H4.8z" fill="#2d9bd2"/><path d="M1.2 6.2V4.2H3.2z" fill="#2d9bd2"/></svg>
<div class="ab" style="left:658px;top:167px;width:135px;height:1px;background:#eeedf2"></div>
<div class="t" style="left:658px;top:178.8px;font-size:8.4px;letter-spacing:-0.11px;color:#333;-webkit-text-stroke:0.1px #333">Select the column for:</div>
<div class="t" style="left:658px;top:199.8px;font-size:8.3px;letter-spacing:-0.2px;color:#333;-webkit-text-stroke:0.1px #333">Email Address</div>
<div class="ab" style="left:756px;top:195.5px;width:16px;height:15.5px;border:1px solid #dcdcdc;background:#fff"></div>
<div class="t" style="left:756px;width:16px;text-align:center;top:199.2px;font-size:8.4px;color:#444">C</div>
<div class="ab" style="left:776px;top:195.5px;width:17px;height:15.5px;border:1px solid #d0d0d0;background:#e6e6e6;border-radius:1px"></div>
<svg style="left:780.5px;top:199.5px" width="9" height="7" viewBox="0 0 9 7"><rect x="0.4" y="0.4" width="8.2" height="6.2" rx="0.6" fill="none" stroke="#333" stroke-width="0.8"/><rect x="0.4" y="0.4" width="8.2" height="1.8" fill="#333"/><path d="M3.1 0.5V6.5M5.9 0.5V6.5M0.5 4.3H8.5" stroke="#333" stroke-width="0.8"/></svg>
<svg style="left:787.5px;top:199px" width="8.5" height="10" viewBox="0 0 10 12"><path d="M3 1.2A0.9 0.9 0 0 1 4.8 1.2V5.2L5 4.2A0.9 0.9 0 0 1 6.6 4.6L6.7 5A0.9 0.9 0 0 1 8.3 5.5V5.8A0.9 0.9 0 0 1 9.4 6.5V8.8C9.4 10.2 8.3 11.3 7 11.3H5.5C4.6 11.3 4 10.9 3.5 10.2L1 6.8A0.9 0.9 0 0 1 2.3 5.6L3 6.3z" fill="#fff" stroke="#222" stroke-width="0.7"/></svg>
<div class="ab" style="left:658px;top:214px;width:6.5px;height:6.5px;border:0.7px solid #8a8a8a;border-radius:1px;background:#fff"></div>
<div class="t" style="left:668px;top:213.5px;font-size:8.3px;letter-spacing:-0.2px;color:#333;-webkit-text-stroke:0.1px #333">Add Headers</div>
<div class="ab" style="left:657.5px;top:227px;width:135px;height:18px;background:#0d0f24;border-radius:2px"></div>
<div class="t" style="left:657.5px;width:135px;text-align:center;top:233px;font-size:8.2px;color:#fff">Start Validation</div>
<div class="ab" style="left:657.5px;top:249.5px;width:135px;height:18px;background:#fff;border:1px solid #bfe6ee;border-radius:2px"></div>
<div class="t" style="left:657.5px;width:135px;text-align:center;top:255.5px;font-size:8.2px;color:#3fa0b5">Reset</div>
<div class="ab" style="left:657.5px;top:272px;width:135px;height:18.5px;background:#d9293b;border-radius:2px"></div>
<div class="t" style="left:657.5px;width:135px;text-align:center;top:278.2px;font-size:8.2px;color:#fff">Buy Credits</div>
<div class="t" style="left:753px;top:297.1px;font-size:8.25px;color:#2d7be0">Contact us</div>
<div class="ab" style="left:658px;top:310px;width:135px;height:1px;background:#eeedf2"></div>
<svg style="left:745px;top:298px" width="6" height="6" viewBox="0 0 6 6"><circle cx="3" cy="3" r="2.7" fill="#222"/><path d="M1.5 3H4.3M3.1 1.8L4.3 3 3.1 4.2" stroke="#fff" stroke-width="0.8" fill="none"/></svg>
<svg style="left:657px;top:322px" width="6" height="6" viewBox="0 0 6 6"><circle cx="3" cy="3" r="2.7" fill="#222"/><path d="M1.5 3H4.3M3.1 1.8L4.3 3 3.1 4.2" stroke="#fff" stroke-width="0.8" fill="none"/></svg>
<div class="t" style="left:665.5px;top:321.3px;font-size:7.4px;color:#2d7be0;-webkit-text-stroke:0.1px #2d7be0">Watch tutorial</div>
<svg style="left:657px;top:334.3px" width="6" height="6" viewBox="0 0 6 6"><circle cx="3" cy="3" r="2.7" fill="#222"/><path d="M1.5 3H4.3M3.1 1.8L4.3 3 3.1 4.2" stroke="#fff" stroke-width="0.8" fill="none"/></svg>
<div class="t" style="left:665.5px;top:333.6px;font-size:7.4px;color:#2d7be0;-webkit-text-stroke:0.1px #2d7be0">Review us</div>
<div class="ab" style="left:650px;top:354.5px;width:150px;height:43.5px;background:#0c0f24"></div>
<svg style="left:688px;top:362px" width="6" height="11" viewBox="0 0 6 11"><path d="M4 11V6H5.6L5.9 4.2H4V3C4 2.5 4.2 2.1 4.9 2.1H6V0.5C5.8 0.5 5.2 0.4 4.6 0.4 3.2 0.4 2.2 1.3 2.2 2.8V4.2H0.6V6H2.2V11z" fill="#fff"/></svg>
<svg style="left:697.5px;top:362.5px" width="10" height="10" viewBox="0 0 10 10"><rect x="0.8" y="0.8" width="8.4" height="8.4" rx="2.4" stroke="#fff" stroke-width="1.2" fill="none"/><circle cx="5" cy="5" r="2" stroke="#fff" stroke-width="1.1" fill="none"/><circle cx="7.5" cy="2.5" r="0.6" fill="#fff"/></svg>
<svg style="left:709.5px;top:363px" width="12" height="9" viewBox="0 0 12 9"><rect x="0" y="0" width="12" height="9" rx="1" fill="#fff"/><path d="M0.5 1L6 5 11.5 1" stroke="#0c0f24" stroke-width="0.9" fill="none"/></svg>
<svg style="left:724.5px;top:362.5px" width="10" height="10" viewBox="0 0 10 10"><path d="M5 0.3A4.7 4.7 0 0 0 3.5 9.5C3.7 9.5 3.8 9.4 3.8 9.2V8.4C2.5 8.7 2.2 7.8 2.2 7.8 2 7.3 1.7 7.1 1.7 7.1 1.3 6.8 1.8 6.8 1.8 6.8 2.2 6.9 2.5 7.3 2.5 7.3 2.9 8 3.6 7.8 3.9 7.7 3.9 7.4 4 7.2 4.2 7.1 3.1 7 2 6.6 2 4.8 2 4.3 2.2 3.9 2.5 3.5 2.4 3.4 2.3 2.9 2.5 2.3 2.5 2.3 2.9 2.2 3.8 2.8A4.4 4.4 0 0 1 6.2 2.8C7.1 2.2 7.5 2.3 7.5 2.3 7.7 2.9 7.6 3.4 7.5 3.5 7.8 3.9 8 4.3 8 4.8 8 6.6 6.9 7 5.8 7.1 6 7.3 6.2 7.6 6.2 8V9.2C6.2 9.4 6.3 9.5 6.5 9.5A4.7 4.7 0 0 0 5 0.3z" fill="#fff"/></svg>
<svg style="left:737.5px;top:363px" width="11" height="9" viewBox="0 0 11 9"><path d="M10.8 1.1C10.4 1.3 10 1.4 9.5 1.4 10 1.1 10.3 0.7 10.5 0.2 10.1 0.5 9.6 0.6 9.1 0.7A2.2 2.2 0 0 0 5.4 2.7 6.3 6.3 0 0 1 0.8 0.4 2.2 2.2 0 0 0 1.5 3.3C1.1 3.3 0.8 3.2 0.5 3 0.5 4.1 1.2 5 2.3 5.2 1.9 5.3 1.5 5.3 1.3 5.3 1.6 6.2 2.4 6.8 3.4 6.8A4.4 4.4 0 0 1 0.1 7.7 6.3 6.3 0 0 0 9.8 2.4V2.1C10.2 1.8 10.5 1.5 10.8 1.1z" fill="#fff"/></svg>
<svg style="left:752px;top:362.5px" width="10" height="10" viewBox="0 0 10 10"><rect x="0.3" y="3.3" width="2" height="6.4" fill="#fff"/><circle cx="1.3" cy="1.3" r="1.2" fill="#fff"/><path d="M3.8 3.3H5.7V4.2C6 3.6 6.8 3.1 7.8 3.1 9.5 3.1 9.8 4.2 9.8 5.7V9.7H7.8V6.2C7.8 5.4 7.7 4.7 6.9 4.7 6 4.7 5.8 5.4 5.8 6.2V9.7H3.8z" fill="#fff"/></svg>
<div class="t" style="left:650px;width:150px;text-align:center;top:381.3px;font-size:8.26px;color:#fff">© Gamalogic 2019 -2024</div>
</div>
</body></html>
